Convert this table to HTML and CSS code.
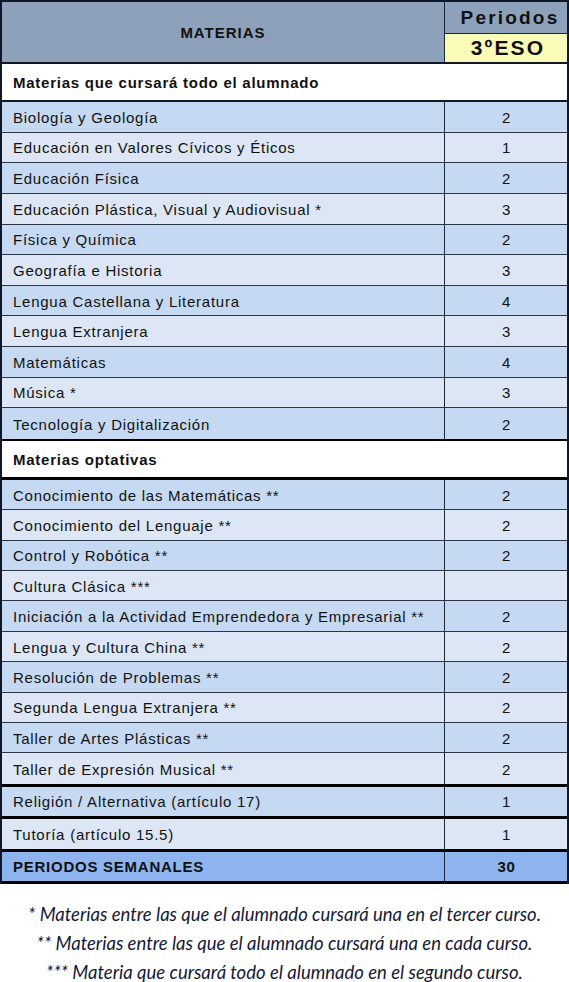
FILE: index.html
```html
<!DOCTYPE html>
<html lang="es">
<head>
<meta charset="utf-8">
<title>Materias 3º ESO</title>
<link rel="stylesheet" href="styles.css">
</head>
<body>
<div class="sheet">
  <div class="head">
    <div class="head-left">MATERIAS</div>
    <div class="head-right">
      <div class="periodos">Periodos</div>
      <div class="curso">3ºESO</div>
    </div>
  </div>

  <div class="section sec-first">Materias que cursará todo el alumnado</div>
  <div class="group g1">
    <div class="row dark"><div class="name">Biología y Geología</div><div class="num">2</div></div>
    <div class="row light"><div class="name">Educación en Valores Cívicos y Éticos</div><div class="num">1</div></div>
    <div class="row dark"><div class="name">Educación Física</div><div class="num">2</div></div>
    <div class="row light"><div class="name">Educación Plástica, Visual y Audiovisual *</div><div class="num">3</div></div>
    <div class="row dark"><div class="name">Física y Química</div><div class="num">2</div></div>
    <div class="row light"><div class="name">Geografía e Historia</div><div class="num">3</div></div>
    <div class="row dark"><div class="name">Lengua Castellana y Literatura</div><div class="num">4</div></div>
    <div class="row light"><div class="name">Lengua Extranjera</div><div class="num">3</div></div>
    <div class="row dark"><div class="name">Matemáticas</div><div class="num">4</div></div>
    <div class="row light"><div class="name">Música *</div><div class="num">3</div></div>
    <div class="row dark"><div class="name">Tecnología y Digitalización</div><div class="num">2</div></div>
  </div>

  <div class="section sec-opt">Materias optativas</div>
  <div class="group g2">
    <div class="row dark"><div class="name">Conocimiento de las Matemáticas **</div><div class="num">2</div></div>
    <div class="row light"><div class="name">Conocimiento del Lenguaje **</div><div class="num">2</div></div>
    <div class="row dark"><div class="name">Control y Robótica **</div><div class="num">2</div></div>
    <div class="row light"><div class="name">Cultura Clásica ***</div><div class="num"></div></div>
    <div class="row dark"><div class="name">Iniciación a la Actividad Emprendedora y Empresarial **</div><div class="num">2</div></div>
    <div class="row light"><div class="name">Lengua y Cultura China **</div><div class="num">2</div></div>
    <div class="row dark"><div class="name">Resolución de Problemas **</div><div class="num">2</div></div>
    <div class="row light"><div class="name">Segunda Lengua Extranjera **</div><div class="num">2</div></div>
    <div class="row dark"><div class="name">Taller de Artes Plásticas **</div><div class="num">2</div></div>
    <div class="row light"><div class="name">Taller de Expresión Musical **</div><div class="num">2</div></div>
  </div>

  <div class="row dark solo religion"><div class="name">Religión / Alternativa (artículo 17)</div><div class="num">1</div></div>
  <div class="row light solo tutoria"><div class="name">Tutoría (artículo 15.5)</div><div class="num">1</div></div>
  <div class="row total solo"><div class="name">PERIODOS SEMANALES</div><div class="num">30</div></div>
</div>

<div class="notes">
  <p>* Materias entre las que el alumnado cursará una en el tercer curso.</p>
  <p>** Materias entre las que el alumnado cursará una en cada curso.</p>
  <p>*** Materia que cursará todo el alumnado en el segundo curso.</p>
</div>
</body>
</html>
```

FILE: styles.css
```css
* { box-sizing: border-box; }

html, body {
  margin: 0;
  padding: 0;
  background: #ffffff;
}

body {
  font-family: "Liberation Sans", Arial, sans-serif;
  color: #111111;
}

.sheet {
  width: 569px;
  border-left: 2px solid #101828;
  border-right: 2px solid #101828;
  border-top: 2px solid #101828;
}

.head {
  display: grid;
  grid-template-columns: 443px 1fr;
  height: 62px;
  background: #8ea1bb;
  border-bottom: 2px solid #101828;
}

.head-left {
  display: flex;
  align-items: center;
  justify-content: center;
  font-weight: bold;
  font-size: 15px;
  letter-spacing: 1px;
  border-right: 1px solid #1c2838;
}

.head-right {
  display: flex;
  flex-direction: column;
}

.periodos {
  height: 32px;
  border-bottom: 1px solid #1c2838;
  display: flex;
  align-items: center;
  justify-content: center;
  font-weight: bold;
  font-size: 19px;
  letter-spacing: 2.2px;
  padding-left: 8px;
}

.curso {
  flex: 1;
  background: #fbfbb8;
  display: flex;
  align-items: center;
  justify-content: center;
  font-weight: bold;
  font-size: 21px;
  letter-spacing: 2.2px;
  padding-left: 4px;
}

.section {
  background: #ffffff;
  font-weight: bold;
  font-size: 15px;
  letter-spacing: 0.75px;
  padding-left: 11px;
  display: flex;
  align-items: center;
}

.sec-first {
  height: 38px;
  border-bottom: 2px solid #101828;
  padding-top: 1px;
}

.sec-opt {
  height: 41px;
  border-top: 2px solid #000000;
  border-bottom: 3px solid #000000;
  padding-top: 1px;
}

.row {
  display: grid;
  grid-template-columns: 443px 1fr;
  height: 30.64px;
  border-bottom: 1px solid #2a3648;
  font-size: 15px;
  letter-spacing: 0.75px;
}

.g2 .row { height: 30.4px; }

.group .row:last-child { border-bottom: none; }

.row .name {
  display: flex;
  align-items: center;
  padding-left: 11px;
  padding-top: 1px;
  border-right: 1px solid #1c2838;
}

.row .num {
  display: flex;
  align-items: center;
  justify-content: center;
  padding-top: 1px;
  padding-left: 1px;
}

.dark { background: #c6d9f3; }
.light { background: #dce6f4; }
.total { background: #8db4ee; font-weight: bold; }

.row.solo {
  border-top: 3px solid #000000;
  border-bottom: none;
}

.row.religion { height: 32px; }
.row.tutoria { height: 33px; }

.row.total {
  border-bottom: 3px solid #000000;
  height: 35px;
}

.notes {
  padding-top: 16px;
  text-align: center;
  font-family: Lato, "Open Sans", sans-serif;
  font-style: italic;
  font-size: 18.5px;
  color: #141a36;
}

.notes p {
  margin: 0;
  line-height: 29px;
}
```
